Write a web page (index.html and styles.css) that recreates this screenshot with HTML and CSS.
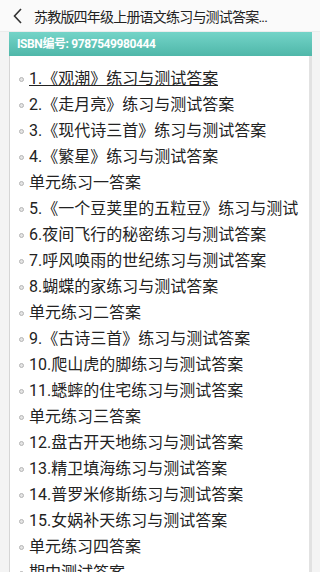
FILE: index.html
```
<!DOCTYPE html>
<html>
<head lang="zh">
    <meta charset="UTF-8">
    <title>练习与测试答案</title>
    <link rel="stylesheet" href="styles.css">
</head>
<body>
    <header class="top">
        <a href="javascript:void(0);" class="back">
            <svg width="10" height="16" viewBox="0 0 10 16"><path d="M8 1 L1.5 8 L8 15" fill="none" stroke="#333" stroke-width="1.6"/></svg>
        </a>
        <h1 class="title">苏教版四年级上册语文练习与测试答案...</h1>
    </header>
    <section class="book">
        <div class="isbn">ISBN编号: 9787549980444</div>
        <ul class="list">
            <li><a href="javascript:void(0);" class="on">1.《观潮》练习与测试答案</a></li>
            <li><a href="javascript:void(0);">2.《走月亮》练习与测试答案</a></li>
            <li><a href="javascript:void(0);">3.《现代诗三首》练习与测试答案</a></li>
            <li><a href="javascript:void(0);">4.《繁星》练习与测试答案</a></li>
            <li><a href="javascript:void(0);">单元练习一答案</a></li>
            <li><a href="javascript:void(0);">5.《一个豆荚里的五粒豆》练习与测试答案</a></li>
            <li><a href="javascript:void(0);">6.夜间飞行的秘密练习与测试答案</a></li>
            <li><a href="javascript:void(0);">7.呼风唤雨的世纪练习与测试答案</a></li>
            <li><a href="javascript:void(0);">8.蝴蝶的家练习与测试答案</a></li>
            <li><a href="javascript:void(0);">单元练习二答案</a></li>
            <li><a href="javascript:void(0);">9.《古诗三首》练习与测试答案</a></li>
            <li><a href="javascript:void(0);">10.爬山虎的脚练习与测试答案</a></li>
            <li><a href="javascript:void(0);">11.蟋蟀的住宅练习与测试答案</a></li>
            <li><a href="javascript:void(0);">单元练习三答案</a></li>
            <li><a href="javascript:void(0);">12.盘古开天地练习与测试答案</a></li>
            <li><a href="javascript:void(0);">13.精卫填海练习与测试答案</a></li>
            <li><a href="javascript:void(0);">14.普罗米修斯练习与测试答案</a></li>
            <li><a href="javascript:void(0);">15.女娲补天练习与测试答案</a></li>
            <li><a href="javascript:void(0);">单元练习四答案</a></li>
            <li><a href="javascript:void(0);">期中测试答案</a></li>
        </ul>
    </section>
</body>
</html>
```
FILE: styles.css
```
body{
    margin: 0;
    background-color: #f4f4f4;
    font-family: Roboto, "Noto Sans CJK SC", sans-serif;
    color: #222222;
    overflow: hidden;
}
ul{
    margin: 0;
    padding: 0;
    list-style-type: none;
}
a{
    text-decoration: none;
    color: #222222;
}
.top{
    height: 31px;
    display: flex;
    align-items: center;
    background-color: #fafafa;
    border-bottom: 1px solid #ececec;
}
.back{
    display: flex;
    margin-left: 13px;
    width: 21px;
}
.title{
    margin: 0;
    font-size: 14px;
    font-weight: normal;
    letter-spacing: -0.8px;
    white-space: nowrap;
    color: #222222;
}
.book{
    margin: 0 8px 0 9px;
    background-color: #ffffff;
}
.isbn{
    height: 24px;
    line-height: 24px;
    padding-left: 8px;
    font-size: 12px;
    letter-spacing: -0.4px;
    font-weight: bold;
    color: #ffffff;
    background: linear-gradient(#74d4c8, #4fb7a9);
}
.list{
    padding: 10px 0 10px;
    border-left: 1px solid #d6d6d6;
    border-right: 3px solid #e2e2e2;
}
.list li{
    display: flex;
    align-items: center;
    height: 26px;
    overflow: hidden;
}
.list li:before{
    content: '';
    flex: none;
    width: 3px;
    height: 3px;
    margin: 1px 5px 0 9px;
    border: 1px solid #b4b4b4;
    border-radius: 50%;
    background-color: #e4e4e4;
}
.list li a{
    display: block;
    height: 26px;
    overflow: hidden;
    font-size: 16px;
    line-height: 26px;
}
.list li a.on{
    text-decoration: underline;
}
```
